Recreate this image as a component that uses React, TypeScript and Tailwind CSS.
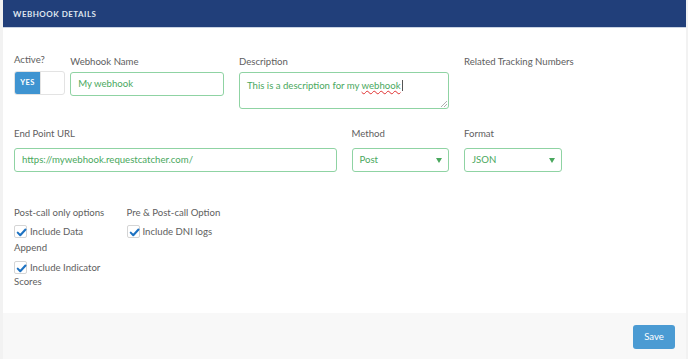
import { useState } from "react";

function Check() {
  return (
    <span className="relative mr-[3px] inline-block h-[13px] w-[13px] translate-y-[3px] rounded-[2px] border border-[#d5d5d5] bg-white align-baseline">
      <svg viewBox="0 0 16 16" className="absolute left-[1px] top-[1px] h-[11px] w-[11px]">
        <path d="M2.5 8.2 L6.2 12 L13.8 3.6" fill="none" stroke="#1d72c2" strokeWidth="3" strokeLinecap="round" strokeLinejoin="round" />
      </svg>
    </span>
  );
}

function Select({ value }: { value: string }) {
  return (
    <div className="flex h-[24px] items-center justify-between rounded-[3px] border border-[#8fd3a3] pl-[7px] pr-[6px] text-[#4aa85e]">
      <span>{value}</span>
      <svg viewBox="0 0 6 5" className="h-[5px] w-[6px]">
        <path d="M0 0 H6 L3 5 Z" fill="#4aa85e" />
      </svg>
    </div>
  );
}

export default function App() {
  const [active, setActive] = useState(true);

  return (
    <div className="flex h-[359px] w-[688px] flex-col bg-[#f2f2f2] pl-[3px] pr-[2px] font-['Lato',sans-serif] text-[9.6px] text-[#606060]">
      <div className="flex h-[28px] items-center border-b border-[#c9d3e3] bg-[#213f7a] pl-[10px] text-[8px] font-bold tracking-[0.06em] text-[#dfe5ef]">
        WEBHOOK DETAILS
      </div>

      <div className="flex-1 bg-white pl-[11px] pr-[12px] pt-[24px]">
        <div className="grid grid-cols-12 gap-x-[15px]">
          <div className="col-span-1">
            <div className="h-[19px] leading-[15px]">Active?</div>
            <button
              onClick={() => setActive((a) => !a)}
              className="flex h-[24px] w-[51px] overflow-hidden rounded-[3px] border border-[#e3e3e3] bg-white"
            >
              <span className={`flex h-full w-[25px] items-center justify-center text-[7.5px] font-bold tracking-[0.06em] ${active ? "bg-[#3f94d1] text-white" : "text-transparent"}`}>
                YES
              </span>
              <span className="flex-1 border-l border-[#e3e3e3]" />
            </button>
          </div>
          <div className="col-span-3">
            <div className="h-[20px] pt-[2px] leading-[15px]">Webhook Name</div>
            <div className="flex h-[24px] items-center rounded-[3px] border border-[#8fd3a3] pl-[7px] text-[#4aa85e]">My webhook</div>
          </div>
          <div className="col-span-4">
            <div className="h-[20px] pt-[2px] leading-[15px]">Description</div>
            <div className="relative h-[37px] rounded-[3px] border border-[#8fd3a3] pl-[7px] pt-[5px] leading-[13px] text-[#4aa85e]">
              This is a description for my{" "}
              <span className="underline decoration-[#e03030] decoration-wavy decoration-[1px]">webhook</span>
              <span className="ml-[1px] inline-block h-[11px] w-px translate-y-[2px] bg-[#555]" />
              <svg viewBox="0 0 6 6" className="absolute bottom-[1px] right-[1px] h-[6px] w-[6px]">
                <path d="M6 0 L0 6 M6 3 L3 6" stroke="#9a9a9a" strokeWidth="0.8" />
              </svg>
            </div>
          </div>
          <div className="col-span-4">
            <div className="h-[20px] pt-[2px] leading-[15px]">Related Tracking Numbers</div>
          </div>
        </div>

        <div className="mt-[17px] grid grid-cols-12 gap-x-[15px]">
          <div className="col-span-6">
            <div className="h-[22px] leading-[15px]">End Point URL</div>
            <div className="flex h-[24px] items-center rounded-[3px] border border-[#8fd3a3] pl-[7px] text-[#4aa85e]">
              https://mywebhook.requestcatcher.com/
            </div>
          </div>
          <div className="col-span-2">
            <div className="h-[22px] leading-[15px]">Method</div>
            <Select value="Post" />
          </div>
          <div className="col-span-2">
            <div className="h-[22px] leading-[15px]">Format</div>
            <Select value="JSON" />
          </div>
        </div>

        <div className="mt-[33px] grid grid-cols-12 gap-x-[15px] leading-[16px]">
          <div className="col-span-2">
            <div className="mb-[1px] whitespace-nowrap">Post-call only options</div>
            <div className="mb-[2px]">
              <Check />
              Include Data
              <br />
              Append
            </div>
            <div className="leading-[14px]">
              <Check />
              Include Indicator
              <br />
              Scores
            </div>
          </div>
          <div className="col-span-2">
            <div className="mb-[1px] whitespace-nowrap">Pre &amp; Post-call Option</div>
            <div className="whitespace-nowrap">
              <Check />
              Include DNI logs
            </div>
          </div>
        </div>
      </div>

      <div className="flex h-[46px] items-start justify-end bg-[#f8f8f8] pr-[11px] pt-[12px]">
        <button className="h-[24px] w-[42px] rounded-[3px] bg-[#4b9bd3] text-[9.6px] text-white">Save</button>
      </div>
    </div>
  );
}
